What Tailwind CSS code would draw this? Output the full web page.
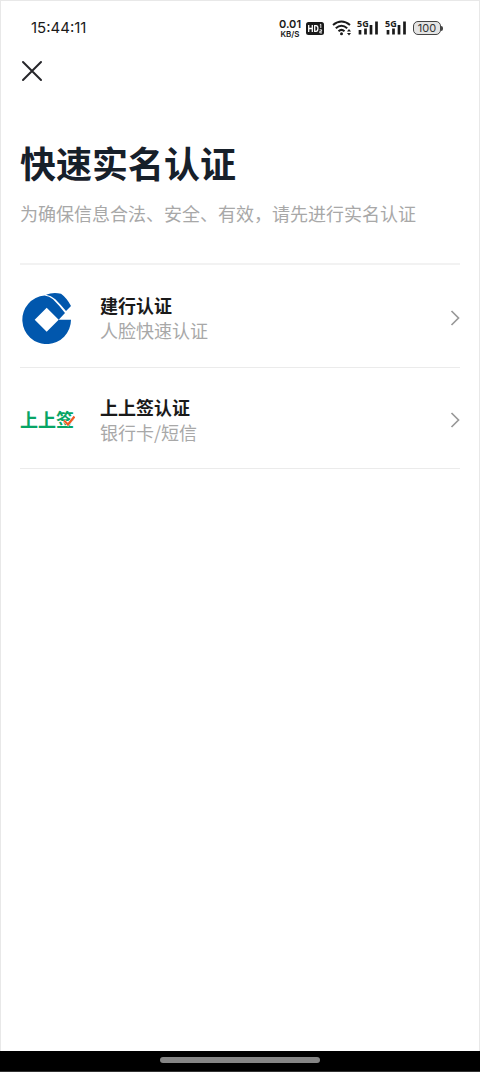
<!DOCTYPE html>
<html lang="zh-CN">
<head>
<meta charset="utf-8">
<meta name="viewport" content="width=device-width, initial-scale=1">
<title>快速实名认证</title>
<script src="https://cdn.jsdelivr.net/npm/@tailwindcss/browser@4"></script>
</head>
<body class="flex min-h-screen flex-col bg-white font-['Noto_Sans_CJK_SC',sans-serif] text-[#1a1a1a]">
<div class="flex flex-1 flex-col border border-b-0 border-[#e8e8e8]">
  <header class="flex h-[54px] items-center justify-between pr-9 pl-[30px] font-[Inter,sans-serif]">
    <time class="text-[15px] leading-5">15:44:11</time>
    <div class="flex items-center">
      <div class="flex w-6 flex-col items-center font-semibold">
        <span class="text-[11px] leading-[11px]">0.01</span>
        <span class="text-[8px] leading-[8px]">KB/S</span>
      </div>
      <svg class="ml-1" width="18" height="13" viewBox="0 0 18 13" role="img" aria-label="HD">
        <rect width="18" height="13" rx="2.500" fill="#1a1a1a"/>
        <path d="M2.700 3v7M6.300 3v7M2.700 6.500h3.600M8.700 3.600v5.800h1.200c1.600 0 2-1.200 2-2.900s-.4-2.900-2-2.900z" fill="none" stroke="#fff" stroke-width="1.300"/>
        <path d="M13.800 2.800l1-.6v3.800M13.600 7.800h2v1.500h-1.800v1.600h2.200" fill="none" stroke="#fff" stroke-width=".9"/>
      </svg>
      <svg class="ml-2" width="21" height="16" viewBox="0 0 21 16" role="img" aria-label="Wi-Fi">
        <g fill="none" stroke="#1a1a1a" stroke-width="2"><path d="M1 5Q9.500-2 18 5M3.800 8.300Q9.500 3.300 15.200 8.300M6.500 11.300Q9.500 8.500 12.500 11.300"/></g>
        <circle cx="9.500" cy="13.700" r="1.500" fill="#1a1a1a"/>
        <path d="M15 11.500l2-2.500 2 2.500zM15 13l2 2.500 2-2.500z" fill="#1a1a1a"/>
      </svg>
      <svg class="ml-1 overflow-visible" width="22" height="16" viewBox="0 0 22 16" role="img" aria-label="5G">
        <path d="M3 10v4.500M8.500 8.500v6M14 5v9.500M19.500 1.500v13" stroke="#1a1a1a" stroke-width="2.700"/>
        <text x="0" y="7" font-size="9" font-weight="700" fill="#1a1a1a" class="font-['Noto_Sans',sans-serif]">5G</text>
      </svg>
      <svg class="ml-[6px] overflow-visible" width="22" height="16" viewBox="0 0 22 16" role="img" aria-label="5G">
        <path d="M3 10v4.500M8.500 8.500v6M14 5v9.500M19.500 1.500v13" stroke="#1a1a1a" stroke-width="2.700"/>
        <text x="0" y="7" font-size="9" font-weight="700" fill="#1a1a1a" class="font-['Noto_Sans',sans-serif]">5G</text>
      </svg>
      <div class="ml-[6px] flex h-[14px] w-[28px] items-center justify-center rounded-[5px] border border-[#444] bg-[#e4e4e4] text-[11px] text-[#333]">100</div>
      <div class="h-[5px] w-[2px] rounded-r-sm bg-[#444]"></div>
    </div>
  </header>
  <main class="px-[19px]">
    <button type="button" aria-label="关闭" class="flex h-8 w-6 items-center justify-center">
      <svg width="22" height="22" viewBox="0 0 22 22" fill="none" stroke="#26262a" stroke-width="2" stroke-linecap="round"><path d="M2 2l18 18M20 2L2 20"/></svg>
    </button>
    <h1 class="mt-[49px] text-[36px] leading-[52px] font-bold text-[#17202a]">快速实名认证</h1>
    <p class="mt-[13px] text-[18px] leading-6 whitespace-nowrap text-[#a8a8a8]">为确保信息合法、安全、有效，请先进行实名认证</p>
    <ul class="mt-[38px] border-t-2 border-[#f2f2f2]">
      <li class="border-b border-[#ebebeb]">
        <a href="#ccb" class="flex h-[102px] items-center pt-[3px]">
          <svg class="ml-[2px]" width="52" height="52" viewBox="36 36 156 156" aria-hidden="true">
            <path d="M104 46.500A73 73 0 1 0 183 119H146L165 99Q148 77 129 58Q118 48 104 46.500Z" fill="#0157ad"/>
            <path d="M108 44Q128 36 153 41Q171 54 183 78L168 93Q151 73 136 58Q123 46 108 44Z" fill="#0157ad"/>
            <path d="M110 83l36 36-36 36-36-36z" fill="#fff"/>
          </svg>
          <span class="ml-[26px] flex flex-1 flex-col">
            <span class="text-[18px] leading-[25px] font-bold">建行认证</span>
            <span class="text-[18px] leading-[25px] text-[#a8a8a8]">人脸快速认证</span>
          </span>
          <svg width="10" height="18" viewBox="0 0 10 18" fill="none" stroke="#999" stroke-width="1.700"><path d="M1.500 2l7 7-7 7"/></svg>
        </a>
      </li>
      <li class="border-b border-[#ebebeb]">
        <a href="#bestsign" class="flex h-[100px] items-center pt-[3px]">
          <span class="relative w-[54px] pb-[2px] text-[18px] leading-6 font-bold text-[#07a566]">上上签
            <svg class="absolute top-2 -right-px" width="12" height="12" viewBox="0 0 12 12" fill="none"><path d="M1 5.500l4 4 6.500-8" stroke="#fff" stroke-width="3"/><path d="M1 5.500l4 4 6.500-8" stroke="#f15a24" stroke-width="2.200"/></svg>
          </span>
          <span class="ml-[26px] flex flex-1 flex-col">
            <span class="text-[18px] leading-[25px] font-bold">上上签认证</span>
            <span class="text-[18px] leading-[25px] text-[#a8a8a8]">银行卡/短信</span>
          </span>
          <svg width="10" height="18" viewBox="0 0 10 18" fill="none" stroke="#999" stroke-width="1.700"><path d="M1.500 2l7 7-7 7"/></svg>
        </a>
      </li>
    </ul>
  </main>
</div>
<footer class="flex h-[21px] justify-center border-b border-[#333] bg-black pt-[6px]">
  <div class="h-[6px] w-1/3 rounded-full bg-[#858585]"></div>
</footer>
</body>
</html>
